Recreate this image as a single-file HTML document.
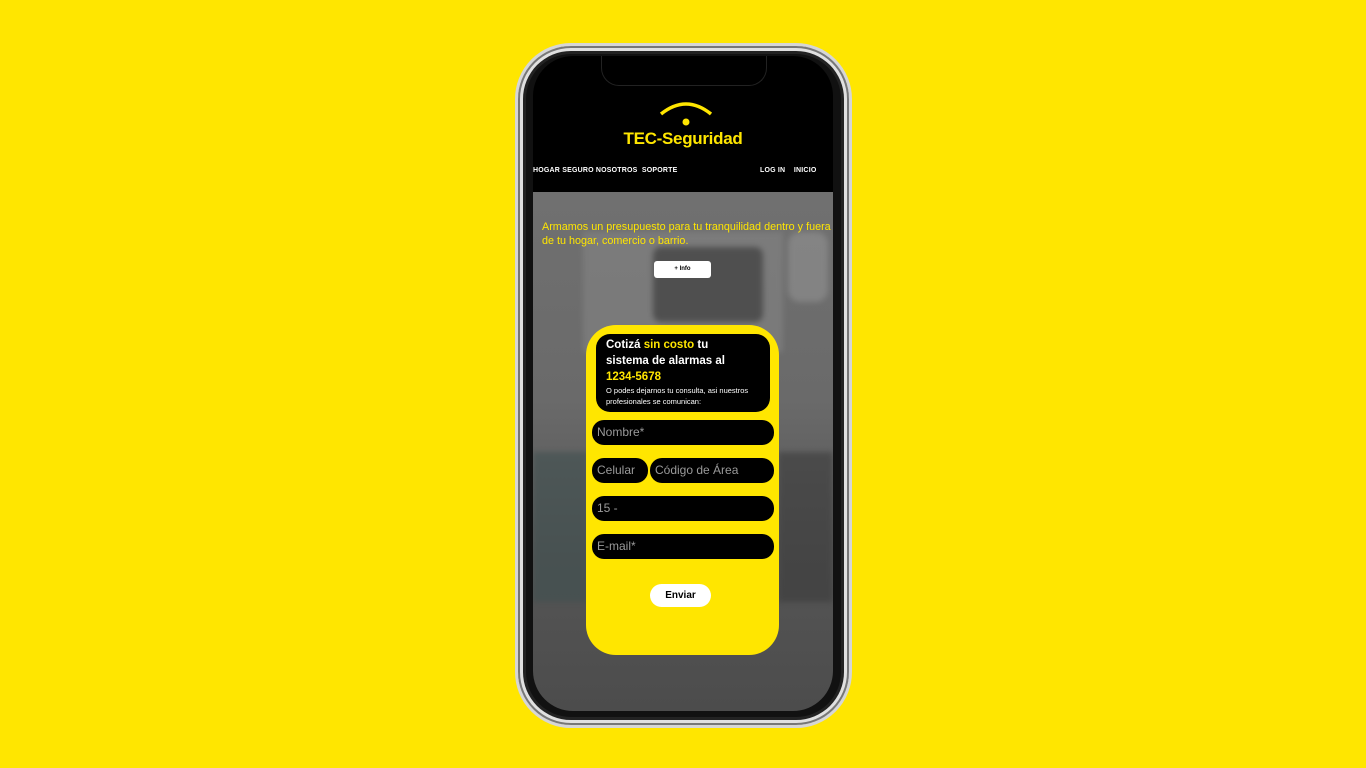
<!DOCTYPE html>
<html><head><meta charset="utf-8"><style>
*{margin:0;padding:0;box-sizing:border-box}
body{width:1366px;height:768px;background:#ffe600;position:relative;overflow:hidden;font-family:"Liberation Sans",sans-serif}
.phone{position:absolute;left:515px;top:43px;width:337px;height:685px;border-radius:56px;background:#111;border:3px solid #d6d6d6;box-shadow:inset 0 0 0 2px #777,inset 0 0 0 5px #e0e0e0,inset 0 0 0 8px #222}
.screen{position:absolute;left:533px;top:56px;width:300px;height:655px;border-radius:40px;background:#000;overflow:hidden}
.notch{position:absolute;left:601px;top:56px;width:166px;height:30px;background:#000;border-radius:0 0 18px 18px;border:1px solid #222;border-top:none}
.img{position:absolute;left:0;top:136px;width:300px;height:519px;background:linear-gradient(180deg,#707070 0%,#6a6a6a 40%,#555 70%,#4c4c4c 100%);overflow:hidden}
.a{position:absolute}
.b{filter:blur(3px)}
.nav{position:absolute;top:111px;color:#fff;font-size:7px;font-weight:bold;letter-spacing:.2px}
.form{position:absolute;left:586px;top:325px;width:193px;height:330px;background:#ffe600;border-radius:30px}
.hd{position:absolute;left:10px;top:9px;width:174px;height:78px;background:#000;border-radius:14px;color:#fff;padding:3px 10px;font-size:11.5px;font-weight:bold;line-height:16px}
.y{color:#ffe600}
.in{position:absolute;height:25px;background:#000;border-radius:12px;color:#9a9a9a;font-size:12px;line-height:25px;padding-left:5px}
</style></head><body>
<div class="phone"></div>
<div class="screen">
 <div class="img">
  <div class="a b" style="left:50px;top:40px;width:200px;height:120px;background:#888;opacity:.5"></div>
  <div class="a b" style="left:120px;top:55px;width:110px;height:75px;background:#333;border-radius:8px;opacity:.6"></div>
  <div class="a b" style="left:255px;top:40px;width:40px;height:70px;background:#999;border-radius:12px;opacity:.5"></div>
  <div class="a b" style="left:0;top:260px;width:55px;height:150px;background:#405050;opacity:.6"></div>
  <div class="a b" style="left:245px;top:260px;width:55px;height:150px;background:#3b3b3b;opacity:.6"></div>
 </div>
 <svg class="a" style="left:125px;top:44px" width="56" height="26"><path d="M3 14 Q28 -6 53 14" stroke="#ffe600" stroke-width="3.5" fill="none"/><circle cx="28" cy="22" r="3.5" fill="#ffe600"/></svg>
 <div class="a" style="left:0;width:300px;top:73px;text-align:center;color:#ffe600;font-weight:bold;font-size:17px;letter-spacing:-.3px">TEC-Seguridad</div>
 <div class="nav" style="left:0">HOGAR SEGURO NOSOTROS&nbsp; SOPORTE</div>
 <div class="nav" style="left:227px">LOG IN&nbsp;&nbsp;&nbsp; INICIO</div>
 <div class="a" style="left:9px;top:164px;width:292px;color:#ffe600;font-size:10.8px;line-height:14px">Armamos un presupuesto para tu tranquilidad dentro y fuera de tu hogar, comercio o barrio.</div>
 <div class="a" style="left:121px;top:205px;width:57px;height:17px;background:#fff;border-radius:3px;font-size:6px;font-weight:bold;text-align:center;line-height:17px">+ Info</div>
</div>
<div class="notch"></div>
<div class="form">
 <div class="hd">Cotizá <span class="y">sin costo</span> tu<br>sistema de alarmas al<br><span class="y">1234-5678</span><div style="font-size:7.5px;font-weight:normal;line-height:11px">O podes dejarnos tu consulta, asi nuestros profesionales se comunican:</div></div>
 <div class="in" style="left:6px;top:95px;width:182px">Nombre*</div>
 <div class="in" style="left:6px;top:133px;width:56px">Celular</div>
 <div class="in" style="left:64px;top:133px;width:124px">Código de Área</div>
 <div class="in" style="left:6px;top:171px;width:182px">15 -</div>
 <div class="in" style="left:6px;top:209px;width:182px">E-mail*</div>
 <div class="a" style="left:64px;top:259px;width:61px;height:23px;background:#fff;border-radius:12px;font-size:10px;font-weight:bold;text-align:center;line-height:23px">Enviar</div>
</div>
</body></html>
